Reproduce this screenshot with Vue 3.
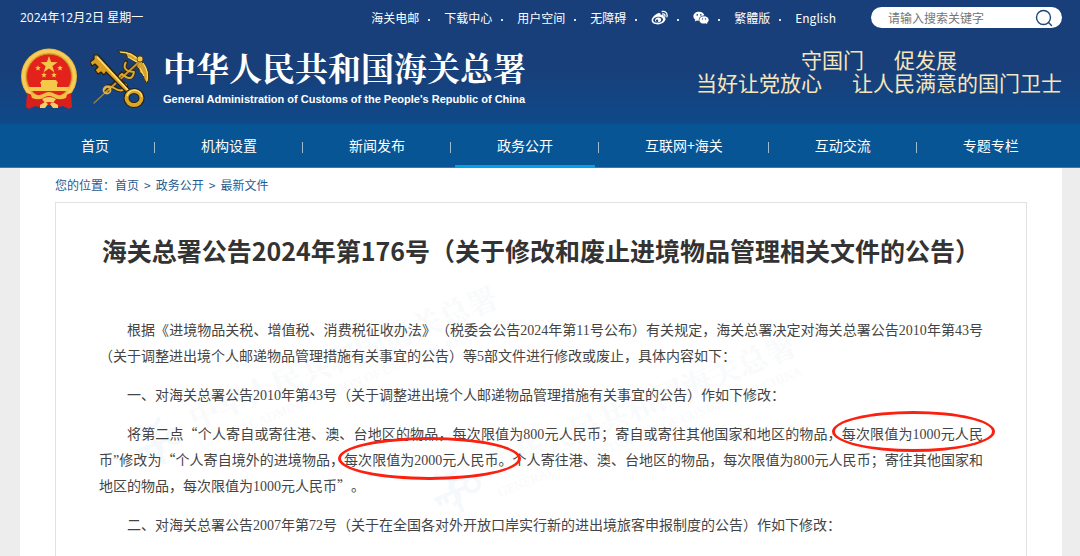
<template>
  <div class="page">
    <header class="header">
      <div class="topbar">
        <span class="date">2024年12月2日 星期一</span>
        <ul class="links">
          <li v-for="item in topLinks" :key="item.label">
            <a href="#" :aria-label="item.label">
              <svg v-if="item.icon === 'weibo'" width="17" height="16" viewBox="0 0 17 16">
                <path fill="#fff" fill-rule="evenodd" d="M7 3.2C8.800 2.500 10 3.200 9.700 5C11.800 4.300 13.200 4.900 12.700 6.600C14.200 7.200 14.900 8.400 14.400 9.800C13.500 12.500 10.300 14.400 6.800 14.400C3.300 14.400 .6 12.700 .6 10.200C.6 7.600 4.200 4.200 7 3.200ZM7 6.800C3.900 7 2 8.700 2.200 10.500C2.400 12.200 4.600 13.200 7.200 13C10.200 12.700 12.200 11 12 9.200C11.800 7.500 9.800 6.600 7 6.800Z"/>
                <path fill="#fff" fill-rule="evenodd" d="M7.600 7.600C9.700 7.800 10.800 9.300 10 10.800C9.200 12.300 7.200 12.900 5.500 12.300C3.900 11.600 3.700 10 4.600 8.800C5.300 7.900 6.400 7.500 7.600 7.600ZM6.100 9.500A1.200 1.200 0 1 0 6.100 11.900A1.200 1.200 0 1 0 6.100 9.500Z"/>
                <path fill="none" stroke="#fff" stroke-width="1.300" stroke-linecap="round" d="M11.200 1.500C14.400 .8 16.900 3.500 15.900 6.800M11.700 4C13.300 3.700 14.300 4.800 13.900 6.300"/>
              </svg>
              <svg v-else-if="item.icon === 'wechat'" width="16" height="14" viewBox="0 0 16 14">
                <path fill="#fff" d="M6 .8C2.800 .8 .4 2.800 .4 5.300C.4 6.700 1.200 7.900 2.300 8.700L1.800 10.500L3.900 9.500C4.500 9.700 5.200 9.800 5.900 9.800C5.300 6.900 7.700 4.500 11.400 4.500C10.900 2.300 8.800 .8 6 .8Z"/>
                <path fill="#fff" d="M11 5.200C8.300 5.200 6.300 6.800 6.300 8.900C6.300 11 8.300 12.600 11 12.600C11.600 12.600 12.200 12.500 12.700 12.300L14.400 13.300L14 11.700C15.100 11 15.700 10 15.700 8.900C15.700 6.800 13.600 5.200 11 5.200Z"/>
                <g fill="#183f7a">
                  <circle cx="4.200" cy="3.900" r=".8"/><circle cx="7.800" cy="3.900" r=".8"/>
                  <circle cx="9.500" cy="7.900" r=".7"/><circle cx="12.500" cy="7.900" r=".7"/>
                </g>
              </svg>
              <template v-else>{{ item.label }}</template>
            </a>
          </li>
        </ul>
        <form class="search" @submit.prevent>
          <input v-model="keyword" type="text" aria-label="搜索" placeholder="请输入搜索关键字">
          <button type="submit" aria-label="搜索">
            <svg width="18" height="18" viewBox="0 0 18 18" fill="none" stroke="#1d4479" stroke-width="1.400">
              <circle cx="8.500" cy="8.500" r="7"/>
              <path d="M13.500 13.500L16.500 16.500" stroke-linecap="round"/>
            </svg>
          </button>
        </form>
      </div>

      <div class="brand">
        <!-- 国徽 -->
        <svg class="emblem" width="58" height="62" viewBox="0 0 58 62">
          <circle cx="29" cy="28.500" r="28" fill="#eeb43a"/>
          <circle cx="29" cy="28.500" r="25.500" fill="none" stroke="#f7cd5a" stroke-width="3"/>
          <circle cx="29" cy="28.500" r="22.500" fill="#e3231b" stroke="#c98b25" stroke-width="1"/>
          <path fill="#f6c84a" d="M29 8L31.100 14.100L37.500 14.200L32.400 18.100L34.300 24.200L29 20.600L23.700 24.200L25.600 18.100L20.500 14.200L26.900 14.100Z"/>
          <path v-for="s in stars" :key="s" :transform="`translate(${s})`" fill="#f6c84a" d="M0 -2.800L.8 -.9L2.800 -.8L1.200 .5L1.800 2.500L0 1.400L-1.800 2.500L-1.200 .5L-2.800 -.8L-.8 -.9Z"/>
          <path fill="#f6c84a" d="M20 35L22 32L36 32L38 35L37 36L37 39L49 39L48 43L10 43L9 39L21 39L21 36Z"/>
          <path fill="#d81f1c" d="M7 45L15 48L24 49L23 60L15 58L9 61L6 59ZM51 45L43 48L34 49L35 60L43 58L49 61L52 59Z"/>
          <path fill="#d81f1c" d="M18 51H40V59L29 57L18 59Z"/>
          <path fill="#f3bf45" d="M10 44Q17 49 23 46Q29 42 35 46Q41 49 48 44L46 50Q38 53 33 49Q29 47 25 49Q20 53 12 50Z"/>
          <path fill="#f6cf63" d="M22 51Q29 47 36 51L33 55Q29 53 25 55ZM20 57L25 54L28 56L25 60L20 60ZM38 57L33 54L30 56L33 60L38 60Z"/>
        </svg>
        <!-- 关徽 -->
        <svg class="key" width="60" height="60" viewBox="0 0 60 60" fill="none" stroke-linejoin="round">
          <path stroke="#332611" stroke-width="4" stroke-linecap="round" d="M16 41L50 11M15 40Q18 33 25 38Q34 44 36 35Q25 30 32 23Q42 32 44 22Q31 21 36 12"/>
          <path fill="#d3a12d" stroke="#3a2a0b" stroke-width="1" d="M50 10Q43 0 27 1Q32 5 36 4Q36 8 40 8Q42 12 48 13Q45 17 49 19Q49 24 53 24Q53 29 57 34Q62 22 53 13Z"/>
          <path stroke="#f8dc72" stroke-width="1.200" d="M30 2Q42 2 49 11M38 7L47 12M53 13Q59 21 57 31M50 18L54 26"/>
          <path stroke="#a9803a" stroke-width="1.300" stroke-linecap="round" d="M4 53L16 42"/>
          <path stroke="#c59631" stroke-width="2" stroke-linecap="round" d="M15 43L49 12"/>
          <path stroke="#d9ac3a" stroke-width="2" d="M14 40Q17 34 24 38Q34 44 36 35Q24 30 32 24Q42 33 44 22Q31 21 36 12"/>
          <circle cx="17" cy="40" r="3.500" stroke="#dfb449" stroke-width="1.800"/>
          <circle cx="50" cy="9" r="3" fill="#f0c84d" stroke="#3a2a0b" stroke-width=".7"/>
          <path fill="#d99f24" stroke="#2a1e0b" stroke-width="1.200" d="M4 5L8 5L40 40L37 43L16 22L14 25L11 22L8 24L5 20L8 17L5 14L2 16L0 12L4 9Z"/>
          <path stroke="#ffe177" stroke-width="1.500" d="M7 7L38 40"/>
          <ellipse cx="44" cy="48" rx="7.500" ry="7" stroke="#2b200c" stroke-width="6"/>
          <ellipse cx="44" cy="48" rx="7.500" ry="7" stroke="#d9a62b" stroke-width="4"/>
          <path stroke="#ffe98d" stroke-width="1.200" d="M37 46Q39 40 45 40Q51 41 52 47"/>
        </svg>
        <div class="name">
          <h1>中华人民共和国海关总署</h1>
          <p>General Administration of Customs of the People's Republic of China</p>
        </div>
        <div class="slogan">
          <div><span>守国门</span><span>促发展</span></div>
          <div><span>当好让党放心</span><span>让人民满意的国门卫士</span></div>
        </div>
      </div>
    </header>

    <nav class="nav">
      <ul>
        <li v-for="item in menus" :key="item">
          <a href="#" :class="{ active: item === current }">{{ item }}</a>
        </li>
      </ul>
    </nav>

    <main class="main">
      <div class="crumbs">
        您的位置：<a href="#">首页</a><span>&gt;</span><a href="#">政务公开</a><span>&gt;</span><a href="#">最新文件</a>
      </div>

      <article class="article">
        <div v-for="n in ['first', 'second']" :key="n" class="watermark" :class="n" aria-hidden="true">
          <svg width="56" height="56" viewBox="0 0 56 56" fill="none" stroke="#f6f9fc" stroke-width="4">
            <path d="M4 28L38 28M8 28V36M15 28V36"/>
            <circle cx="45" cy="28" r="7"/>
            <path d="M26 50L26 8M14 4Q20 14 26 10Q32 14 38 4M20 40Q34 36 26 28Q18 22 32 17"/>
          </svg>
          <div>中华人民共和国海关总署</div>
          <small>GENERAL ADMINISTRATION OF CUSTOMS, P.R.CHINA</small>
        </div>

        <h2>海关总署公告2024年第176号（关于修改和废止进境物品管理相关文件的公告）</h2>

        <div class="content">
          <p>根据《进境物品关税、增值税、消费税征收办法》（税委会公告<i>2024</i>年第<i>11</i>号公布）有关规定，海关总署决定对海关总署公告<i>2010</i>年第<i>43</i>号（关于调整进出境个人邮递物品管理措施有关事宜的公告）等<i>5</i>部文件进行修改或废止，具体内容如下：</p>
          <p>一、对海关总署公告<i>2010</i>年第<i>43</i>号（关于调整进出境个人邮递物品管理措施有关事宜的公告）作如下修改：</p>
          <p>将第二点“个人寄自或寄往港、澳、台地区的物品，每次限值为<i>800</i>元人民币；寄自或寄往其他国家和地区的物品，<span class="mark high">每次限值为<i>1000</i>元人民</span>币<i>”</i>修改为“个人寄自境外的进境物品，<span class="mark">每次限值为<i>2000</i>元人民币。</span>个人寄往港、澳、台地区的物品，每次限值为<i>800</i>元人民币；寄往其他国家和地区的物品，每次限值为<i>1000</i>元人民币”。</p>
          <p>二、对海关总署公告<i>2007</i>年第<i>72</i>号（关于在全国各对外开放口岸实行新的进出境旅客申报制度的公告）作如下修改：</p>
        </div>
      </article>
    </main>
  </div>
</template>

<script setup>
import { ref } from 'vue'

const keyword = ref('')
const current = ref('政务公开')

const topLinks = [
  { label: '海关电邮' },
  { label: '下载中心' },
  { label: '用户空间' },
  { label: '无障碍' },
  { label: '微博', icon: 'weibo' },
  { label: '微信', icon: 'wechat' },
  { label: '繁體版' },
  { label: 'English' }
]

const menus = ['首页', '机构设置', '新闻发布', '政务公开', '互联网+海关', '互动交流', '专题专栏']

// 四颗小星的位置
const stars = ['18 20', '40 20', '24 27', '34 27']
</script>

<style>
body {
  margin: 0;
  background: #ededed;
}
</style>

<style scoped>
.page {
  display: flex;
  flex-direction: column;
  min-height: 100vh;
  font-family: "Noto Sans CJK SC", sans-serif;
  font-size: 12px;
  text-spacing-trim: space-all;
}

a {
  color: inherit;
  text-decoration: none;
}

ul {
  display: flex;
  margin: 0;
  padding: 0;
  list-style: none;
}

.header {
  height: 124px;
  box-sizing: border-box;
  padding: 7px 18px 0 20px;
  background: linear-gradient(#183f7a 0%, #183f7a 55%, #0f4a89 100%);
  color: #fff;
}

.topbar {
  display: flex;
  align-items: center;
  height: 21px;
}

.date {
  font-family: "Open Sans", "Noto Sans CJK SC", sans-serif;
  line-height: 18px;
}

.links {
  margin-left: auto;
  line-height: 18px;
}

.links li {
  display: flex;
  align-items: center;
}

.links li + li::before {
  content: '';
  width: 2px;
  height: 2px;
  margin: 5px 14px 0 9px;
  background: #dbe4ef;
}

.links a {
  display: flex;
}

.search {
  display: flex;
  align-items: center;
  width: 191px;
  height: 21px;
  margin-left: 35px;
  box-sizing: border-box;
  padding: 0 9px 0 17px;
  border-radius: 11px;
  background: #fff;
}

.search input {
  flex: 1;
  min-width: 0;
  padding: 0;
  border: 0;
  outline: 0;
  background: none;
  font: 12px "Noto Sans CJK SC", sans-serif;
  color: #333;
}

.search input::placeholder {
  color: #757575;
}

.search button {
  display: flex;
  padding: 0;
  border: 0;
  background: none;
}

.brand {
  display: flex;
  align-items: flex-start;
  margin-top: 20px;
}

.key {
  margin: 2px 0 0 12px;
}

.name {
  margin-left: 13px;
  white-space: nowrap;
}

.name h1 {
  margin: 0 0 5px;
  font-family: "Noto Serif CJK SC", "Noto Sans CJK SC", serif;
  font-size: 33px;
  line-height: 38px;
  font-weight: 700;
}

.name p {
  margin: 0;
  font: 700 11px/16px "Liberation Sans", Arial, sans-serif;
}

.slogan {
  margin-left: auto;
  font-size: 21px;
  line-height: 23px;
  color: #f8e6bb;
  white-space: nowrap;
}

.slogan div {
  display: flex;
  justify-content: center;
  gap: 30px;
}

.nav {
  height: 44px;
  box-sizing: border-box;
  padding-left: 39px;
  border-bottom: 1px solid #3c78ab;
  background: #075595;
}

.nav li {
  display: flex;
  align-items: center;
}

.nav li + li::before {
  content: '';
  width: 1px;
  height: 11px;
  margin: 2px 4px 0 3px;
  background: #9dbbd3;
}

.nav a {
  height: 44px;
  box-sizing: border-box;
  padding: 0 42px;
  font-size: 14px;
  line-height: 42px;
  color: #fff;
  white-space: nowrap;
}

.nav a.active {
  border-bottom: 3px solid #049fe9;
}

.main {
  display: flex;
  flex: 1;
  flex-direction: column;
  margin: 0 18px 0 20px;
  padding: 0 35px;
  background: #fff;
}

.crumbs {
  line-height: 34px;
  color: #1f5a92;
}

.crumbs span {
  margin: 0 5px;
}

.article {
  position: relative;
  z-index: 0;
  flex: 1;
  padding: 30px 43px 4px;
  border: 1px solid #e2e2e2;
  border-bottom: 0;
  overflow: hidden;
}

.article h2 {
  margin: 0;
  font-size: 25px;
  line-height: 34px;
  font-weight: 700;
  color: #333;
  text-align: center;
}

.content {
  margin-top: 49px;
  font-size: 14px;
  line-height: 26px;
  color: #444;
  text-align: justify;
}

.content p {
  margin: 0 0 13px;
  text-indent: 2em;
}

.content i {
  font-family: "Liberation Serif", serif;
  font-style: normal;
  line-height: 1;
}

/* 红圈标注 */
.mark {
  position: relative;
}

.mark::after {
  content: '';
  position: absolute;
  inset: -12px -8px -11px -6px;
  border: 3px solid #fb2010;
  border-radius: 50%;
}

.mark.high::after {
  inset: -12px -12px -9px -10px;
}

.watermark {
  position: absolute;
  z-index: -1;
  font-family: "Noto Serif CJK SC", "Noto Sans CJK SC", serif;
  font-size: 30px;
  line-height: 40px;
  font-weight: 700;
  color: #f8fafc;
  white-space: nowrap;
  transform: rotate(-22deg);
}

.watermark svg {
  position: absolute;
  top: 4px;
  left: -66px;
}

.watermark small {
  display: block;
  font: 13px/20px "Liberation Serif", serif;
}

.watermark.first {
  top: 132px;
  left: 125px;
}

.watermark.second {
  top: 180px;
  left: 423px;
}
</style>
